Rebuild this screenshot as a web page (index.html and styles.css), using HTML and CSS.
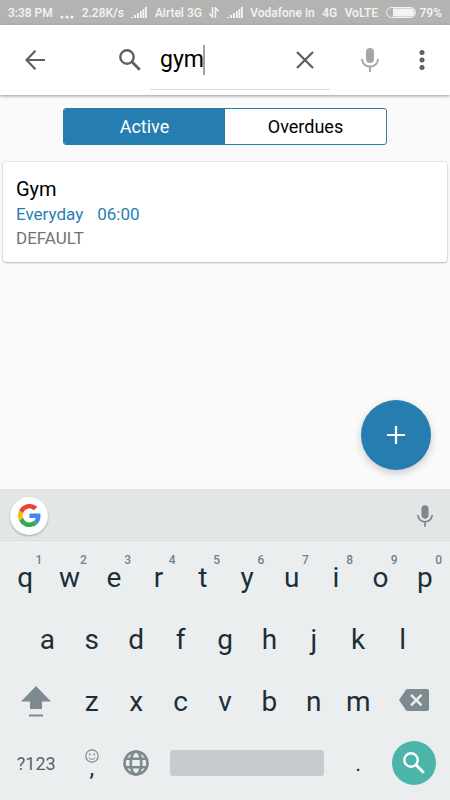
FILE: index.html
```html
<!DOCTYPE html>
<html lang="en">
<head>
<meta charset="utf-8">
<meta name="viewport" content="width=device-width, initial-scale=1">
<title>Reminders</title>
<link rel="stylesheet" href="styles.css">
</head>
<body>
<svg class="defs" width="0" height="0" aria-hidden="true">
  <symbol id="signal" viewBox="0 0 16 11"><path d="M0 10h2v1H0zM3 8h2v3H3zM6 6h2v5H6zM9 4h1.800v7H9zM11.500 2h1.800v9h-1.800zM14 0h1.800v11H14z"/></symbol>
  <symbol id="mic" viewBox="0 0 18 24"><rect x="5" y="0" width="8" height="15" rx="4"/><path d="M1 11c0 4.400 3.600 7.500 8 7.500s8-3.100 8-7.500M9 18v6" fill="none" stroke="currentColor" stroke-width="2"/></symbol>
  <symbol id="search" viewBox="0 0 22 22"><circle cx="8" cy="8" r="6.700" fill="none" stroke="currentColor" stroke-width="2.400"/><path d="M12.800 12.800l8 8" stroke="currentColor" stroke-width="2.800"/></symbol>
</svg>
<div class="screen">
  <div class="status">
    <span>3:38 PM</span>
    <svg class="dots" viewBox="0 0 14 4"><circle cx="2" cy="2" r="1.500"/><circle cx="7" cy="2" r="1.500"/><circle cx="12" cy="2" r="1.500"/></svg>
    <span>2.28K/s</span>
    <svg class="signal"><use href="#signal"/></svg>
    <span>Airtel 3G</span>
    <svg class="transfer" viewBox="0 0 10 11"><path d="M3.500 0v10L0 6.500M6.500 11V1L10 4.500" fill="none" stroke="currentColor" stroke-width="1.500"/></svg>
    <svg class="signal"><use href="#signal"/></svg>
    <span>Vodafone in</span>
    <span>4G</span>
    <span>VoLTE</span>
    <div class="power">
      <svg class="battery" viewBox="0 0 30 11"><rect x=".5" y=".5" width="29" height="10" rx="5" fill="none" stroke="currentColor"/><path d="M7 1.500h17.500a4 4 0 010 8H7z"/></svg>
      <span>79%</span>
    </div>
  </div>

  <header class="appbar">
    <button class="icon-button" type="button" aria-label="Back">
      <svg width="20" height="20" viewBox="0 0 20 20"><path d="M10.500.800L1.500 10l9 9.200M1.500 10H20" fill="none" stroke="currentColor" stroke-width="2.200"/></svg>
    </button>
    <form class="search">
      <label for="query" aria-label="Search"><svg width="22" height="22"><use href="#search"/></svg></label>
      <div class="field">
        <div class="entry">
          <input id="query" type="text" value="gym" size="3">
          <span class="caret"></span>
        </div>
        <button class="icon-button" type="button" aria-label="Clear">
          <svg width="18" height="18" viewBox="0 0 18 18"><path d="M1 1l16 16M17 1L1 17" stroke="currentColor" stroke-width="2.200"/></svg>
        </button>
      </div>
    </form>
    <button class="icon-button voice" type="button" aria-label="Voice search"><svg width="18" height="24"><use href="#mic"/></svg></button>
    <button class="icon-button more" type="button" aria-label="More options">
      <svg width="6" height="20" viewBox="0 0 6 20"><circle cx="3" cy="2.500" r="2.500"/><circle cx="3" cy="10" r="2.500"/><circle cx="3" cy="17.500" r="2.500"/></svg>
    </button>
  </header>

  <main class="content">
    <div class="segments">
      <button class="segment selected" type="button">Active</button>
      <button class="segment" type="button">Overdues</button>
    </div>
    <article class="card">
      <h2>Gym</h2>
      <p class="when"><span>Everyday</span><time>06:00</time></p>
      <p class="tag">DEFAULT</p>
    </article>
    <button class="fab" type="button" aria-label="Add reminder">
      <svg width="18" height="18" viewBox="0 0 18 18"><path d="M9 0v18M0 9h18" stroke="currentColor" stroke-width="2.200"/></svg>
    </button>
  </main>

  <section class="keyboard" aria-label="Keyboard">
    <div class="strip">
      <button class="google" type="button" aria-label="Google">
        <svg width="23" height="23" viewBox="0 0 48 48"><path fill="#4285f4" d="M46.980 24.550c0-1.570-.150-3.090-.380-4.550H24v9.020h12.940c-.580 2.960-2.260 5.480-4.780 7.180l7.730 6c4.510-4.180 7.090-10.360 7.090-17.650z"/><path fill="#fbbc05" d="M10.530 28.590c-.480-1.450-.760-2.990-.760-4.590s.270-3.140.760-4.590l-7.980-6.190C.920 16.460 0 20.120 0 24s.920 7.540 2.560 10.780l7.970-6.190z"/><path fill="#ea4335" d="M24 9.500c3.540 0 6.710 1.220 9.210 3.600l6.850-6.850C35.900 2.380 30.470 0 24 0 14.620 0 6.510 5.380 2.560 13.220l7.980 6.190C12.430 13.720 17.740 9.500 24 9.500z"/><path fill="#34a853" d="M24 48c6.480 0 11.930-2.130 15.890-5.810l-7.730-6c-2.150 1.450-4.920 2.300-8.160 2.300-6.260 0-11.570-4.220-13.470-9.910l-7.980 6.190C6.510 42.620 14.620 48 24 48z"/></svg>
      </button>
      <button class="dictate" type="button" aria-label="Dictate"><svg width="16" height="22"><use href="#mic"/></svg></button>
    </div>
    <div class="keys">
      <div class="row">
        <button type="button">q<sup>1</sup></button><button type="button">w<sup>2</sup></button><button type="button">e<sup>3</sup></button><button type="button">r<sup>4</sup></button><button type="button">t<sup>5</sup></button><button type="button">y<sup>6</sup></button><button type="button">u<sup>7</sup></button><button type="button">i<sup>8</sup></button><button type="button">o<sup>9</sup></button><button type="button">p<sup>0</sup></button>
      </div>
      <div class="row middle">
        <button type="button">a</button><button type="button">s</button><button type="button">d</button><button type="button">f</button><button type="button">g</button><button type="button">h</button><button type="button">j</button><button type="button">k</button><button type="button">l</button>
      </div>
      <div class="row">
        <button class="wide" type="button" aria-label="Shift"><svg width="30" height="32" viewBox="0 0 30 32"><path d="M15 1l15 15.500h-9V24H9v-7.500H0zM8 29.500h14v2H8z"/></svg></button>
        <button type="button">z</button><button type="button">x</button><button type="button">c</button><button type="button">v</button><button type="button">b</button><button type="button">n</button><button type="button">m</button>
        <button class="wide" type="button" aria-label="Delete"><svg width="30" height="24" viewBox="0 0 30 24"><path d="M8.500 0H28a2 2 0 012 2v18a2 2 0 01-2 2H8.500a2 2 0 01-1.500-.800L0 11 7 .800A2 2 0 018.500 0z"/><path d="M12 5.800l10.500 10.500M22.500 5.800L12 16.300" stroke="#ebeeef" stroke-width="2.600"/></svg></button>
      </div>
      <div class="row">
        <button class="wide symbols" type="button">?123</button>
        <button class="comma" type="button"><svg width="14" height="14" viewBox="0 0 14 14"><circle cx="7" cy="7" r="6.200" fill="none" stroke="currentColor" stroke-width="1.200"/><circle cx="4.800" cy="5.400" r=".9"/><circle cx="9.200" cy="5.400" r=".9"/><path d="M3.800 8.500c1.200 2.500 5.200 2.500 6.400 0" fill="none" stroke="currentColor"/></svg><span>,</span></button>
        <button type="button" aria-label="Language"><svg width="26" height="26" viewBox="0 0 26 26"><g fill="none" stroke="currentColor" stroke-width="2.600"><circle cx="13" cy="13" r="11.500"/><ellipse cx="13" cy="13" rx="5.300" ry="11.500"/><path d="M2 8.800h22M2 17.200h22"/></g></svg></button>
        <button class="space" type="button" aria-label="Space"><span></span></button>
        <button class="period" type="button">.</button>
        <button class="wide" type="button" aria-label="Search"><span class="enter"><svg width="22" height="22"><use href="#search"/></svg></span></button>
      </div>
    </div>
  </section>
</div>
</body>
</html>
```
FILE: styles.css
```css
* { box-sizing: border-box; }

body {
  margin: 0;
  background: #fafafa;
  color: #000;
  font-family: Roboto, sans-serif;
}

button, input {
  margin: 0;
  padding: 0;
  border: 0;
  background: none;
  color: inherit;
  font: inherit;
}

svg { display: block; flex: none; fill: currentColor; }
h2, p { margin: 0; font-weight: 400; }

.defs { position: absolute; }

.screen {
  display: flex;
  flex-direction: column;
  min-height: 100vh;
}

.status {
  display: flex;
  align-items: center;
  justify-content: space-between;
  height: 25px;
  padding: 0 8px;
  background: #b3b4b2;
  color: #f4f4f3;
  font-size: 12px;
  font-weight: 500;
  white-space: nowrap;
}

.dots { width: 14px; height: 4px; margin-top: 8px; }
.signal { width: 16px; height: 11px; }
.transfer { width: 10px; height: 11px; }
.battery { width: 30px; height: 11px; }
.power { display: flex; align-items: center; gap: 4px; }

.appbar {
  display: flex;
  align-items: center;
  height: 70px;
  padding: 0 10px;
  background: #fff;
  color: #5f5f5f;
  box-shadow: 0 1px 3px rgba(0, 0, 0, .4);
  z-index: 1;
}

.icon-button {
  display: flex;
  flex: none;
  align-items: center;
  justify-content: center;
  width: 50px;
  height: 50px;
}

.search {
  display: flex;
  flex: 1;
  align-items: center;
  gap: 9px;
  padding-left: 59px;
}

.field {
  display: flex;
  flex: 1;
  align-items: center;
  justify-content: space-between;
  height: 60px;
  border-bottom: 1px solid #dedede;
}

.entry { position: relative; margin-left: 10px; }

.entry input {
  display: block;
  width: 80px;
  height: 30px;
  color: #000;
  font-size: 23px;
  outline: 0;
}

.caret {
  position: absolute;
  top: 0;
  left: 43px;
  width: 2px;
  height: 30px;
  background: #a0a0a0;
}

.voice { width: 40px; margin-left: 20px; color: #a6a6a6; }
.more { width: 36px; margin-left: 14px; }

.content {
  position: relative;
  flex: 1;
  padding: 13px 3px;
}

.segments {
  display: grid;
  grid-template-columns: 1fr 1fr;
  width: 73%;
  height: 37px;
  margin: 0 auto 17px;
  overflow: hidden;
  border: 1px solid #267eb0;
  border-radius: 3px;
  background: #fff;
  font-size: 18px;
}

.selected { background: #267eb0; color: #fff; }

.card {
  padding: 14px 13px 12px;
  border-radius: 3px;
  background: #fff;
  box-shadow: 0 0 2px rgba(0, 0, 0, .25), 0 1px 2px rgba(0, 0, 0, .2);
  font-size: 17px;
  line-height: 24px;
}

.card h2 { font-size: 20px; line-height: 26px; }
.when { display: flex; gap: 14px; color: #267eb0; }
.tag { color: #737373; }

.fab {
  position: absolute;
  right: 19px;
  bottom: 19px;
  display: grid;
  place-items: center;
  width: 70px;
  height: 70px;
  border-radius: 50%;
  background: #267eb0;
  color: #fff;
  box-shadow: 0 3px 8px rgba(0, 0, 0, .2);
}

.keyboard { background: #ebeeef; color: #1b2f38; }

.strip {
  display: flex;
  align-items: center;
  justify-content: space-between;
  height: 54px;
  padding: 0 17px 0 10px;
  border-bottom: 1px solid #f5f7f7;
  background: #e2e6e7;
}

.google {
  display: grid;
  place-items: center;
  width: 38px;
  height: 38px;
  border-radius: 50%;
  background: #fff;
  box-shadow: 0 1px 2px rgba(0, 0, 0, .3);
}

.dictate { color: #7d888c; }

.keys { padding: 3px 3px 6px; }

.row {
  display: grid;
  grid-template-columns: repeat(20, 1fr);
  height: 62px;
}

.row button {
  position: relative;
  display: flex;
  grid-column: span 2;
  align-items: center;
  justify-content: center;
  min-width: 0;
  font-size: 28px;
}

.row .wide { grid-column: span 3; color: #7d8a8f; }
.row .space { grid-column: span 8; }
.middle button:first-child { grid-column: 2 / span 2; }

.row sup {
  position: absolute;
  top: 7px;
  right: 5px;
  color: #74808a;
  font-size: 12px;
  font-weight: 500;
  line-height: 14px;
}

.row .symbols { color: #56646a; font-size: 18px; }
.row .comma { flex-direction: column; padding-bottom: 4px; font-size: 24px; line-height: 10px; }
.row .period { font-size: 22px; }
.row svg { color: #7d8a8f; }

.space span {
  width: 100%;
  height: 26px;
  margin: 0 12px;
  border-radius: 3px;
  background: #c6cbce;
}

.enter {
  display: grid;
  place-items: center;
  width: 44px;
  height: 44px;
  border-radius: 50%;
  background: #4cb5a9;
}

.row .enter svg { color: #fff; }
```
